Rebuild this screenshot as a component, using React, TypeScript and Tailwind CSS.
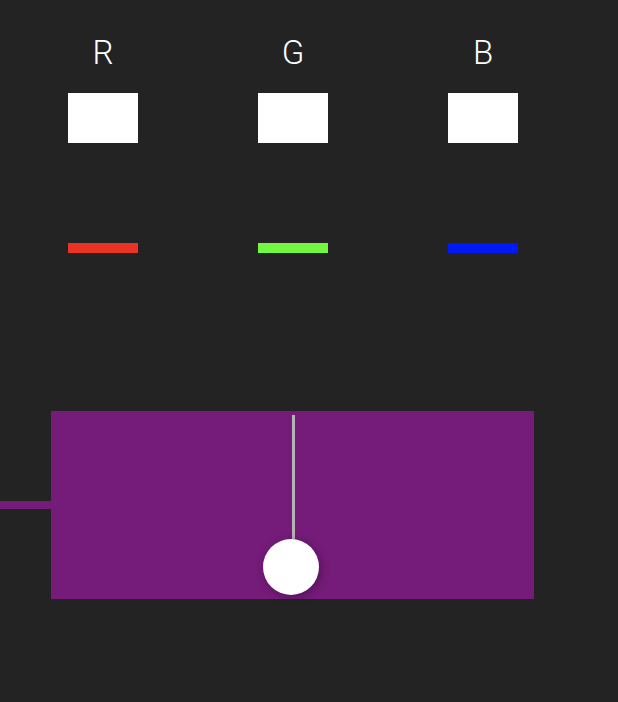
export default function App() {
  const channels = [
    { label: "R", bar: "bg-[#ea3323]" },
    { label: "G", bar: "bg-[#73f640]" },
    { label: "B", bar: "bg-[#0019f5]" },
  ];

  return (
    <div className="min-h-[702px] w-full bg-[#232323] font-['Liberation_Sans',Arial,sans-serif]">
      <div className="flex gap-[120px] pl-[68px] pt-9">
        {channels.map((c) => (
          <div key={c.label} className="flex w-[70px] flex-col items-center">
            <p className="font-['Roboto',sans-serif] text-[33px] font-light leading-none text-white">{c.label}</p>
            <div className="mt-6 h-[50px] w-[70px] bg-white" />
            <div className={`mt-[100px] h-[10px] w-[70px] ${c.bar}`} />
          </div>
        ))}
      </div>

      <div className="mt-[158px] flex items-center">
        <div className="h-2 w-[51px] bg-[#751b7a]" />
        <div className="flex h-[188px] w-[483px] flex-col items-center bg-[#751b7a] py-1">
          <div className="ml-[2px] w-[3px] flex-1 bg-[#b4b4b4]" />
          <div className="mr-[3px] h-14 w-14 rounded-full bg-white shadow-[2px_2px_10px_rgba(0,0,0,0.3)]" />
        </div>
      </div>
    </div>
  );
}
